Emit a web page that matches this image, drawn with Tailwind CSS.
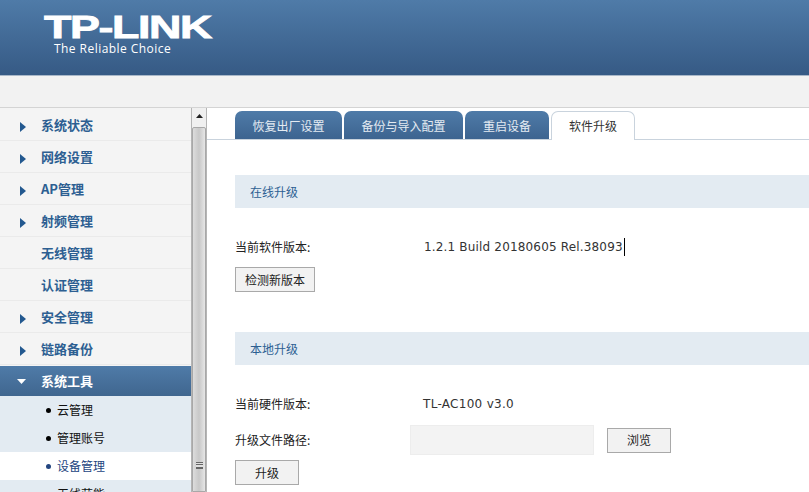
<!DOCTYPE html>
<html lang="en">

<head>
    <meta charset="UTF-8">
    <title>TP-LINK</title>
    <script src="https://cdn.jsdelivr.net/npm/@tailwindcss/browser@4"></script>
</head>

<body class="h-[492px] w-[809px] overflow-hidden bg-white font-['DejaVu_Sans','Noto_Sans_CJK_SC',sans-serif] text-[12px] text-[#222]">
    <!-- header -->
    <header class="h-[76px] border-b border-[#a9b8c9] bg-gradient-to-b from-[#4f7ba8] to-[#365a85] pl-[44px] pt-[12px] text-white">
        <div class="h-[28px] w-[122px] origin-top-left scale-x-[1.4] font-['Liberation_Sans',sans-serif] text-[32px] leading-[30px] font-bold tracking-[-1px] [-webkit-text-stroke:0.8px_white]">TP-LINK</div>
        <div class="mt-[1px] ml-[10px] font-['Open_Sans',sans-serif] text-[12px] leading-[16px] tracking-[0.45px]">The Reliable Choice</div>
    </header>
    <div class="h-[32px] border-b border-[#d4d4d4] bg-[#f2f2f2]"></div>

    <div class="flex h-[384px]">
        <!-- menu -->
        <nav class="w-[192px] overflow-hidden border-r border-[#b5b5b5] bg-[#f4f4f4] pt-[1px] font-['Noto_Sans_CJK_SC',sans-serif] text-[13px] font-bold text-[#2d5f92]">
            <a class="flex h-[32px] items-center border-b border-[#eaeaea] pl-[20px]"><svg class="mt-[4px] mr-[15px]" width="6" height="10" viewBox="0 0 6 10"><path d="M0 0l6 5-6 5z" fill="#23588f"/></svg>系统状态</a>
            <a class="flex h-[32px] items-center border-b border-[#eaeaea] pl-[20px]"><svg class="mt-[4px] mr-[15px]" width="6" height="10" viewBox="0 0 6 10"><path d="M0 0l6 5-6 5z" fill="#23588f"/></svg>网络设置</a>
            <a class="flex h-[32px] items-center border-b border-[#eaeaea] pl-[20px]"><svg class="mt-[4px] mr-[15px]" width="6" height="10" viewBox="0 0 6 10"><path d="M0 0l6 5-6 5z" fill="#23588f"/></svg>AP管理</a>
            <a class="flex h-[32px] items-center border-b border-[#eaeaea] pl-[20px]"><svg class="mt-[4px] mr-[15px]" width="6" height="10" viewBox="0 0 6 10"><path d="M0 0l6 5-6 5z" fill="#23588f"/></svg>射频管理</a>
            <a class="flex h-[32px] items-center border-b border-[#eaeaea] pl-[41px]">无线管理</a>
            <a class="flex h-[32px] items-center border-b border-[#eaeaea] pl-[41px]">认证管理</a>
            <a class="flex h-[32px] items-center border-b border-[#eaeaea] pl-[20px]"><svg class="mt-[4px] mr-[15px]" width="6" height="10" viewBox="0 0 6 10"><path d="M0 0l6 5-6 5z" fill="#23588f"/></svg>安全管理</a>
            <a class="flex h-[32px] items-center border-b border-[#eaeaea] pl-[20px]"><svg class="mt-[4px] mr-[15px]" width="6" height="10" viewBox="0 0 6 10"><path d="M0 0l6 5-6 5z" fill="#23588f"/></svg>链路备份</a>
            <a class="mt-[1px] flex h-[30px] items-center bg-gradient-to-b from-[#4f7ba8] to-[#40668f] pl-[17px] text-white"><svg class="mr-[15px]" width="9" height="5" viewBox="0 0 9 5"><path d="M0 0h9L4.500 5z" fill="#fff"/></svg>系统工具</a>
            <ul class="bg-[#e3ebf2] text-[12px] font-normal text-[#111]">
                <li class="flex h-[28px] items-center pl-[46px]"><span class="mr-[6px] size-[5px] rounded-full bg-black"></span>云管理</li>
                <li class="flex h-[28px] items-center pl-[46px]"><span class="mr-[6px] size-[5px] rounded-full bg-black"></span>管理账号</li>
                <li class="flex h-[28px] items-center bg-white pl-[46px] text-[#23457f]"><span class="mr-[6px] size-[5px] rounded-full bg-[#23457f]"></span>设备管理</li>
                <li class="flex h-[28px] items-center pl-[46px]"><span class="mr-[6px] size-[5px] rounded-full bg-black"></span>无线获能</li>
            </ul>
        </nav>

        <!-- scrollbar -->
        <div class="relative w-[15px] border-r border-[#b5b5b5] bg-[#f0f0f0]">
            <svg class="absolute top-[6px] left-[4px]" width="7" height="4" viewBox="0 0 7 4"><path d="M3.500 0L7 4H0z" fill="#222"/></svg>
            <div class="absolute top-[19px] right-0 bottom-0 left-0 flex items-end justify-center rounded-t-[2px] border border-[#a8a8a8] bg-gradient-to-r from-[#dcdcdc] via-[#c8c8c8] to-[#e6e6e6] pb-[22px]">
                <div class="h-[7px] w-[7px] border-y border-[#666] bg-[linear-gradient(#e0e0e0_1px,#666_1px,#666_2px,#e0e0e0_2px)] bg-[length:100%_3px]"></div>
            </div>
        </div>

        <!-- content -->
        <main class="min-w-0 flex-1 bg-white font-['DejaVu_Sans','Noto_Sans_CJK_SC',sans-serif]">
            <div class="flex h-[32px] items-end gap-[2px] border-b border-[#c9d3dd] pl-[28px] font-['Noto_Sans_CJK_SC',sans-serif] text-[#e4ebf2]">
                <span class="flex h-[28px] w-[107px] items-center justify-center rounded-t-[7px] bg-gradient-to-b from-[#4f7ba8] to-[#3d6490] pt-[1px]">恢复出厂设置</span>
                <span class="flex h-[28px] w-[119px] items-center justify-center rounded-t-[7px] bg-gradient-to-b from-[#4f7ba8] to-[#3d6490] pt-[1px]">备份与导入配置</span>
                <span class="flex h-[28px] w-[84px] items-center justify-center rounded-t-[7px] bg-gradient-to-b from-[#4f7ba8] to-[#3d6490] pt-[1px]">重启设备</span>
                <span class="relative top-[1px] flex h-[29px] w-[84px] items-center justify-center rounded-t-[7px] border border-b-0 border-[#c9d3dd] bg-white text-[#333]">软件升级</span>
            </div>

            <div class="pl-[28px]">
                <section class="mt-[35px] flex h-[33px] items-center bg-[#e3ebf2] pl-[15px] font-['Noto_Sans_CJK_SC',sans-serif] text-[#2d5f92]">在线升级</section>
                <div class="mt-[30px] flex h-[18px] items-center">
                    <span class="w-[189px] font-['Noto_Sans_CJK_SC',sans-serif]">当前软件版本:</span>
                    <span class="border-r border-black pr-[1px] tracking-[0.17px] text-[#333]">1.2.1 Build 20180605 Rel.38093</span>
                </div>
                <button class="mt-[11px] block h-[25px] w-[80px] border border-[#a9a9a9] bg-[#f2f2f2] font-['Noto_Sans_CJK_SC',sans-serif] text-[#222]">检测新版本</button>

                <section class="mt-[40px] flex h-[33px] items-center bg-[#e3ebf2] pl-[15px] font-['Noto_Sans_CJK_SC',sans-serif] text-[#2d5f92]">本地升级</section>
                <div class="mt-[30px] flex h-[18px] items-center">
                    <span class="w-[188px] font-['Noto_Sans_CJK_SC',sans-serif]">当前硬件版本:</span>
                    <span class="tracking-[0.3px] text-[#333]">TL-AC100 v3.0</span>
                </div>
                <div class="mt-[12px] flex h-[30px] items-center">
                    <span class="w-[175px] font-['Noto_Sans_CJK_SC',sans-serif]">升级文件路径:</span>
                    <div class="h-[30px] w-[184px] border border-[#ededed] bg-[#f3f3f3]"></div>
                    <button class="ml-[13px] h-[25px] w-[64px] border border-[#a9a9a9] bg-[#f2f2f2] font-['Noto_Sans_CJK_SC',sans-serif] text-[#222]">浏览</button>
                </div>
                <button class="mt-[5px] block h-[25px] w-[64px] border border-[#a9a9a9] bg-[#f2f2f2] font-['Noto_Sans_CJK_SC',sans-serif] text-[#222]">升级</button>
            </div>
        </main>
    </div>
</body>

</html>
